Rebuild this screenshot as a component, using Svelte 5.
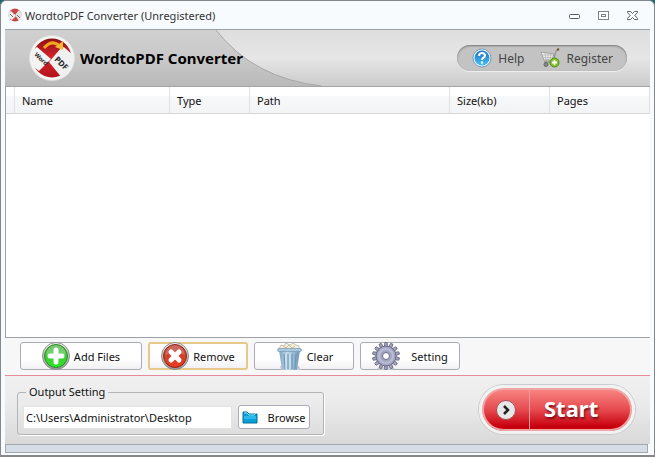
<script>
  const columns = [
    { label: '', cls: 'stub' },
    { label: 'Name', cls: 'name' },
    { label: 'Type', cls: 'type' },
    { label: 'Path', cls: 'path' },
    { label: 'Size(kb)', cls: 'size' },
    { label: 'Pages', cls: 'pages' },
  ];

  // rotation of each tooth on the settings gear
  const teeth = Array.from({ length: 14 }, (_, i) => (i * 360) / 14);

  let outputPath = $state('C:\\Users\\Administrator\\Desktop');
</script>

{#snippet logo()}
  <svg class="logo" viewBox="0 0 46 46" aria-hidden="true">
    <defs>
      <clipPath id="disc"><circle cx="23" cy="23" r="20" /></clipPath>
      <linearGradient id="discRed" x1="0" y1="0" x2="0" y2="1">
        <stop offset="0" stop-color="#8e1216" />
        <stop offset="0.5" stop-color="#d8232b" />
        <stop offset="1" stop-color="#b3141b" />
      </linearGradient>
    </defs>
    <circle cx="23" cy="23" r="22.5" fill="#f6f6f4" stroke="#dcdcdc" />
    <circle cx="23" cy="23" r="19.5" fill="url(#discRed)" />
    <g clip-path="url(#disc)">
      <path d="M8 12 L22 24 L10 36 L0 28 V18Z" fill="#f4f4f4" />
    </g>
    <path d="M20 27 L32 13 Q34 11 36 13 L44 20 Q47 30 38 40 L33 43Z" fill="#f0f0f0" />
    <path d="M15 13 Q23 4 31 11" fill="none" stroke="#f2a51f" stroke-width="3" />
    <path d="M26 12 L34 6 L34 15Z" fill="#f7b733" />
    <text x="5" y="20" transform="rotate(44 5 20)" font-size="6">Word</text>
    <text x="25" y="25" transform="rotate(44 25 25)" font-size="8">PDF</text>
  </svg>
{/snippet}

<div class="window">
  <header class="titlebar">
    <svg class="app-icon" viewBox="0 0 14 14" aria-hidden="true">
      <circle cx="7" cy="7" r="6.5" fill="#c9484b" />
      <path d="M0 5 L3 3 L8 8 L4 12 L1 10Z" fill="#eee" />
      <path d="M7 7 L11 2 L14 6 L13 11 L11 13Z" fill="#e4e4e4" />
      <path d="M2 6 L5 9 M9 7 L12 10" stroke="#666" />
    </svg>
    <h1>WordtoPDF Converter (Unregistered)</h1>
    <button class="caption" aria-label="Minimize">
      <svg viewBox="0 0 12 12"><rect x="0.5" y="5.5" width="10" height="4" rx="1" fill="#fff" stroke="#555b66" /></svg>
    </button>
    <button class="caption" aria-label="Maximize">
      <svg viewBox="0 0 12 12">
        <rect x="0.5" y="2.5" width="10" height="8" fill="#fff" stroke="#7d828b" />
        <rect x="3.5" y="5.5" width="4" height="2" fill="#fff" stroke="#7d828b" />
      </svg>
    </button>
    <button class="caption" aria-label="Close">
      <svg viewBox="0 0 12 12">
        <path d="M0.5 2.5H3.5L5.5 4.5L7.5 2.5H10.5V3.5L7.8 6.5L10.5 9.5V10.5H7.5L5.5 8.5L3.5 10.5H0.5V9.5L3.2 6.5L0.5 3.5Z" fill="#fff" stroke="#555b66" />
      </svg>
    </button>
  </header>

  <main>
    <div class="banner">
      <svg class="swoosh" viewBox="0 0 320 56" aria-hidden="true">
        <defs>
          <linearGradient id="swooshFill" x1="0" y1="0" x2="0" y2="1">
            <stop offset="0" stop-color="#d0d0d0" />
            <stop offset="0.5" stop-color="#c9c9c9" />
            <stop offset="1" stop-color="#b9b9b9" />
          </linearGradient>
        </defs>
        <path d="M0 0 H211 Q248 48 316 56 H0Z" fill="url(#swooshFill)" />
        <path d="M211 0 Q248 48 316 56" fill="none" stroke="#a6a6a6" />
      </svg>
      {@render logo()}
      <h2>WordtoPDF Converter</h2>
      <nav>
        <a href="#help">
          <svg width="20" height="20" viewBox="0 0 20 20" aria-hidden="true">
            <defs>
              <linearGradient id="helpBlue" x1="0" y1="0" x2="0" y2="1">
                <stop offset="0" stop-color="#1d6fc0" />
                <stop offset="1" stop-color="#45c0f5" />
              </linearGradient>
            </defs>
            <circle cx="10" cy="10" r="9" fill="#f4fafe" stroke="#6b9cc4" />
            <circle cx="10" cy="10" r="7.5" fill="url(#helpBlue)" />
            <path d="M7 8 Q7 5 10 5 Q13 5 13 7.5 Q13 9 11 10 Q10 10.7 10 12" fill="none" stroke="#fff" stroke-width="2" />
            <circle cx="10" cy="14.5" r="1.2" fill="#fff" />
          </svg>
          Help
        </a>
        <a href="#register">
          <svg width="20" height="20" viewBox="0 0 20 20" aria-hidden="true">
            <path d="M1 4 L14 6 L12 12 H4Z" fill="#eee" stroke="#a2a2a2" />
            <path d="M3 7H13 M4 9.5H12 M5 5L6 12 M8 5.5V12 M11 6L10 12" stroke="#b0b0b0" stroke-width="0.7" />
            <path d="M19 1 L16 3 L13 14 H4" fill="none" stroke="#999" stroke-width="1.5" />
            <path d="M17 2 L19 1" stroke="#6b5c2a" stroke-width="2" />
            <circle cx="6" cy="16.5" r="2" fill="#888" stroke="#666" />
            <circle cx="14.5" cy="14.5" r="4.5" fill="#7cbf1c" stroke="#4d9013" />
            <path d="M14.5 11.8V17.2M11.8 14.5H17.2" stroke="#fff" stroke-width="1.8" />
          </svg>
          Register
        </a>
      </nav>
    </div>

    <div class="list">
      <table>
        <thead>
          <tr>
            {#each columns as col}
              <th class={col.cls}>{col.label}</th>
            {/each}
          </tr>
        </thead>
        <tbody></tbody>
      </table>
    </div>

    <div class="toolbar">
      <button class="tool wide">
        <svg width="28" height="28" viewBox="0 0 28 28" aria-hidden="true">
          <defs>
            <linearGradient id="ring" x1="0" y1="0" x2="0" y2="1">
              <stop offset="0" stop-color="#f4f4f4" />
              <stop offset="1" stop-color="#999" />
            </linearGradient>
            <linearGradient id="addGreen" x1="0" y1="0" x2="0" y2="1">
              <stop offset="0" stop-color="#4fae43" />
              <stop offset="1" stop-color="#2ee52a" />
            </linearGradient>
          </defs>
          <circle cx="14" cy="14" r="13.5" fill="url(#ring)" stroke="#8c8c8c" />
          <circle cx="14" cy="14" r="11.5" fill="url(#addGreen)" stroke="#278f22" />
          <path d="M4 13 A10 10 0 0 1 24 13 Q14 9 4 13Z" fill="#fff" opacity="0.25" />
          <path d="M14 8V20M8 14H20" stroke="#fff" stroke-width="5" stroke-linecap="round" />
        </svg>
        Add Files
      </button>
      <button class="tool active">
        <svg width="28" height="28" viewBox="0 0 28 28" aria-hidden="true">
          <defs>
            <linearGradient id="removeRed" x1="0" y1="0" x2="0" y2="1">
              <stop offset="0" stop-color="#b5453a" />
              <stop offset="1" stop-color="#ee3b1c" />
            </linearGradient>
          </defs>
          <circle cx="14" cy="14" r="13.5" fill="url(#ring)" stroke="#8c8c8c" />
          <circle cx="14" cy="14" r="11.5" fill="url(#removeRed)" stroke="#942216" />
          <path d="M4 13 A10 10 0 0 1 24 13 Q14 9 4 13Z" fill="#fff" opacity="0.2" />
          <path d="M10 10L18 18M18 10L10 18" stroke="#fff" stroke-width="5" stroke-linecap="round" />
        </svg>
        Remove
      </button>
      <button class="tool">
        <svg width="28" height="28" viewBox="0 0 28 28" aria-hidden="true">
          <defs>
            <linearGradient id="binBlue" x1="0" y1="0" x2="1" y2="0">
              <stop offset="0" stop-color="#7fa3bf" />
              <stop offset="0.4" stop-color="#c0dbed" />
              <stop offset="1" stop-color="#6b93b3" />
            </linearGradient>
          </defs>
          <path d="M5 24 H24 L26 28 H6Z" fill="#c9cdd0" />
          <path d="M4 7 L6 3 L9 4 L11 1 L15 3 L18 1 L21 3 L24 4 L24 8Z" fill="#f5efe2" stroke="#bdb197" stroke-width="0.8" />
          <path d="M8 4L11 6L14 3L17 6L20 4" fill="none" stroke="#c8b994" />
          <path d="M4 8 H25 L22 28 H7Z" fill="url(#binBlue)" />
          <rect x="2.5" y="6.5" width="24" height="3" rx="1.5" fill="#a9c9df" stroke="#7698b1" stroke-width="0.7" />
          <path d="M9 12 L10 27 M13 12 V27 M17 12 V27 M21 12 L20 27" stroke="#6f97b5" stroke-width="1.2" />
          <path d="M11 12 V27 M15 12 V27" stroke="#e0eff8" stroke-width="0.9" />
        </svg>
        Clear
      </button>
      <button class="tool spaced">
        <svg width="28" height="28" viewBox="0 0 28 28" aria-hidden="true">
          <ellipse cx="14" cy="26.5" rx="9" ry="1.5" fill="#ccc" />
          {#each teeth as angle}
            <path d="M12.3 5 L12.8 0.5 H15.2 L15.7 5Z" fill="#a3a5c0" stroke="#666980" stroke-width="0.8" transform="rotate({angle} 14 14)" />
          {/each}
          <circle cx="14" cy="14" r="10" fill="#a3a6c3" stroke="#6d7089" />
          <circle cx="14" cy="14" r="7" fill="none" stroke="#bbbdd4" stroke-width="2" />
          <circle cx="14" cy="14" r="3.5" fill="#fff" stroke="#676a82" />
        </svg>
        Setting
      </button>
    </div>

    <footer>
      <fieldset>
        <legend>Output Setting</legend>
        <input type="text" aria-label="Output folder" bind:value={outputPath} />
        <button class="browse">
          <svg width="16" height="14" viewBox="0 0 16 14" aria-hidden="true">
            <path d="M1 2 H5 L7 4 H15 V13 H1Z" fill="#079fd8" stroke="#086e9b" />
            <path d="M2 3 H5 L7 5 H12 L14 3" fill="none" stroke="#8ee0f7" />
            <path d="M2 6 H14 V9 H2Z" fill="#2cb9ea" />
          </svg>
          Browse
        </button>
      </fieldset>
      <button class="start">
        <span class="go">
          <svg width="20" height="20" viewBox="0 0 20 20" aria-hidden="true">
            <circle cx="10" cy="10" r="9.5" fill="#e7e7e7" stroke="#a5525a" />
            <path d="M8 6 L12 10 L8 14" fill="none" stroke="#222" stroke-width="2.5" />
          </svg>
        </span>
        <span class="start-label">Start</span>
      </button>
    </footer>
    <div class="status"></div>
  </main>
</div>

<style>
  :global(body) {
    background: #1b6a70;
  }

  .window {
    box-sizing: border-box;
    min-height: 100vh;
    display: flex;
    flex-direction: column;
    padding: 0 4px 2px;
    border: 1px solid #85878b;
    border-bottom-width: 2px;
    border-radius: 6px 6px 0 0;
    background: #f8fbfe;
    font-family: 'Noto Sans', 'Open Sans', sans-serif;
    font-size: 11px;
    color: #111;
  }

  button {
    font: inherit;
    color: inherit;
    cursor: pointer;
  }

  svg {
    flex: none;
    display: block;
  }

  .titlebar {
    height: 28px;
    display: flex;
    align-items: center;
    padding: 0 11px 0 3px;
  }

  .app-icon {
    width: 14px;
    height: 14px;
    margin-right: 3px;
  }

  .titlebar h1 {
    flex: 1;
    margin: 0;
    font-size: 11px;
    font-weight: 400;
    color: #333;
  }

  .caption {
    width: 12px;
    height: 12px;
    margin-left: 17px;
    padding: 0;
    border: 0;
    background: none;
  }

  main {
    flex: 1;
    display: flex;
    flex-direction: column;
    border-top: 1px solid #9aa0a6;
  }

  .banner {
    position: relative;
    height: 56px;
    display: flex;
    align-items: center;
    padding: 0 23px 0 24px;
    background: linear-gradient(#dedede, #e6e6e6 50%, #cbcbcb);
    border-bottom: 1px solid #a4a4a4;
  }

  .swoosh {
    position: absolute;
    left: 0;
    top: 0;
    width: 320px;
    height: 56px;
  }

  .logo {
    position: relative;
    width: 46px;
    height: 46px;
  }

  .logo text {
    font-weight: 700;
    fill: #222;
  }

  .banner h2 {
    position: relative;
    flex: 1;
    margin: 0 0 0 5px;
    font-size: 15px;
    font-weight: 700;
    color: #000;
  }

  nav {
    display: flex;
    align-items: center;
    gap: 16px;
    height: 26px;
    padding: 0 14px 0 15px;
    border-radius: 14px;
    background: #c3c3c3;
    box-shadow: inset 0 1px 2px #777, 0 1px 0 #eee;
  }

  nav a {
    display: flex;
    align-items: center;
    gap: 6px;
    font-size: 12px;
    color: #444;
    text-decoration: none;
  }

  .list {
    flex: 1;
    background: #fff;
    border: 1px solid #9da1a8;
    border-width: 0 0 1px 1px;
  }

  table {
    width: 100%;
    table-layout: fixed;
    border-collapse: separate;
    border-spacing: 0;
  }

  th {
    box-sizing: border-box;
    height: 27px;
    padding: 0 7px;
    text-align: left;
    font-weight: 400;
    background: linear-gradient(#fff 35%, #f7f8fa 36%, #f3f4f6);
    border-right: 1px solid #dfe1e4;
    border-bottom: 1px solid #d5d5d5;
  }

  .stub {
    width: 9px;
    padding: 0;
  }

  .name {
    width: 155px;
  }

  .type {
    width: 80px;
  }

  .size,
  .pages {
    width: 100px;
  }

  .toolbar {
    display: flex;
    gap: 6px;
    padding: 4px 15px 5px;
    background: #f7f7f7;
    border-bottom: 1px solid #e68a9c;
  }

  .tool {
    box-sizing: border-box;
    width: 100px;
    height: 28px;
    display: flex;
    align-items: center;
    justify-content: center;
    gap: 4px;
    padding: 0;
    background: linear-gradient(#fff 60%, #f1f1f3);
    border: 1px solid #a9abb8;
    border-radius: 3px;
  }

  .tool.wide {
    width: 122px;
  }

  .tool.active {
    border: 2px solid #e6c88a;
  }

  .tool.spaced {
    gap: 11px;
  }

  footer {
    display: flex;
    align-items: center;
    justify-content: space-between;
    padding: 8px 15px 9px 12px;
    background: linear-gradient(#f0f0f0, #ebebeb 40%, #d9d9d9);
  }

  fieldset {
    box-sizing: border-box;
    width: 307px;
    display: flex;
    align-items: center;
    gap: 6px;
    margin: 0;
    padding: 5px 13px 5px 5px;
    border: 1px solid #b2b4b8;
    border-radius: 3px;
    box-shadow: 1px 1px 0 #fff;
  }

  legend {
    margin-left: 3px;
    padding: 0 3px;
    line-height: 16px;
  }

  input {
    box-sizing: border-box;
    flex: 1;
    min-width: 0;
    height: 23px;
    padding: 0 2px;
    border: 1px solid #e3e3e3;
    background: #fff;
    font: inherit;
    color: #111;
  }

  .browse {
    box-sizing: border-box;
    width: 72px;
    height: 24px;
    display: flex;
    align-items: center;
    justify-content: center;
    gap: 9px;
    padding: 0;
    background: #fff;
    border: 1px solid #a9abb8;
    border-radius: 3px;
  }

  .start {
    box-sizing: border-box;
    width: 156px;
    height: 49px;
    display: flex;
    padding: 1px;
    border: 3px solid #f2f2f2;
    border-radius: 25px;
    background: linear-gradient(#fa8985, #e64b50 50%, #c8000e 90%) padding-box;
    box-shadow: 0 0 0 1px #c9cccf, inset 0 0 0 2px #f0a5a5;
    color: #fff;
  }

  .go {
    width: 46px;
    display: flex;
    align-items: center;
    justify-content: center;
    border-right: 1px solid #ee9a9a;
  }

  .start-label {
    flex: 1;
    padding-left: 14px;
    text-align: left;
    font-size: 22px;
    line-height: 38px;
    font-weight: 700;
    text-shadow: 1px 2px 2px #7c1018;
  }

  .status {
    height: 7px;
    margin-right: 2px;
    border: 1px solid #a3a8b0;
    background: #d6dde6;
  }
</style>
